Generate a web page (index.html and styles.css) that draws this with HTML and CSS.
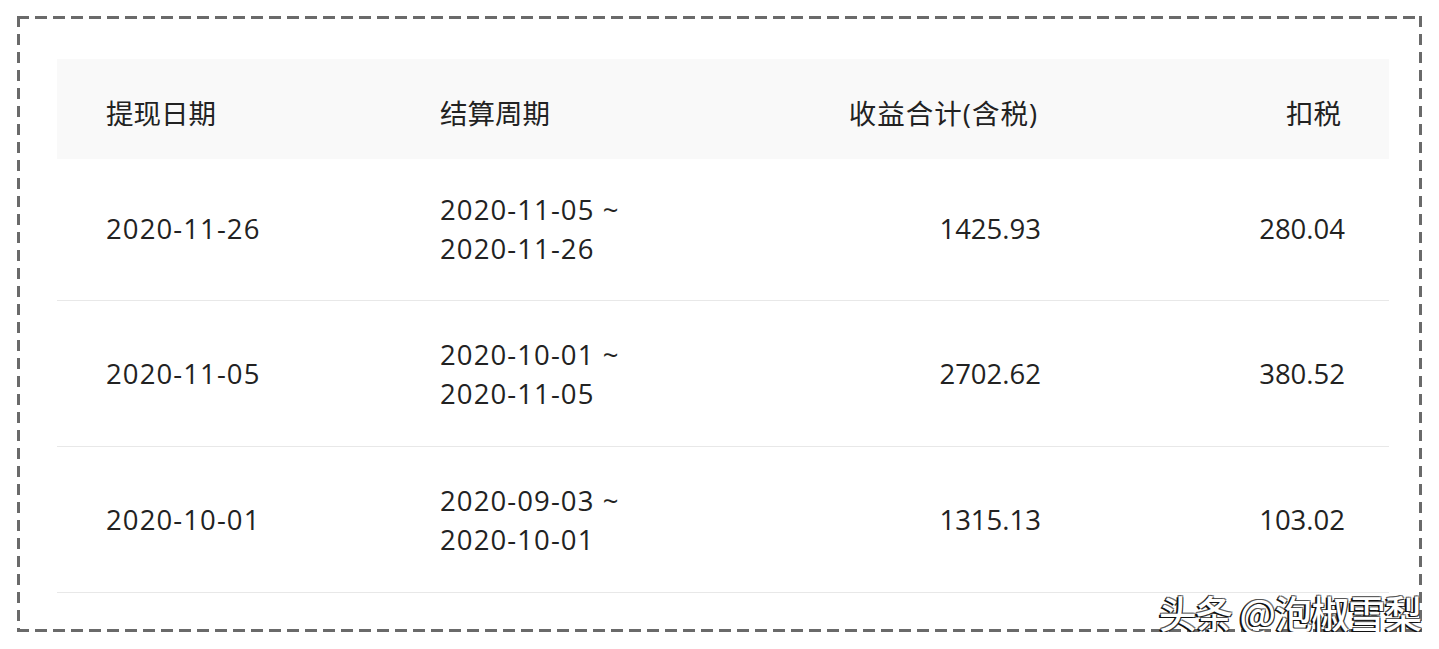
FILE: index.html
```html
<!DOCTYPE html>
<html lang="zh">
<head>
<meta charset="utf-8">
<link rel="stylesheet" href="styles.css">
</head>
<body>
<div class="frame">
  <div class="table">
    <div class="row head">
      <div class="cell c1">提现日期</div>
      <div class="cell c2">结算周期</div>
      <div class="cell c3">收益合计(含税)</div>
      <div class="cell c4">扣税</div>
    </div>
    <div class="row body first">
      <div class="cell c1 date">2020-11-26</div>
      <div class="cell c2 date">2020-11-05 ~<br>2020-11-26</div>
      <div class="cell c3">1425.93</div>
      <div class="cell c4">280.04</div>
    </div>
    <div class="row body">
      <div class="cell c1 date">2020-11-05</div>
      <div class="cell c2 date">2020-10-01 ~<br>2020-11-05</div>
      <div class="cell c3">2702.62</div>
      <div class="cell c4">380.52</div>
    </div>
    <div class="row body">
      <div class="cell c1 date">2020-10-01</div>
      <div class="cell c2 date">2020-09-03 ~<br>2020-10-01</div>
      <div class="cell c3">1315.13</div>
      <div class="cell c4">103.02</div>
    </div>
  </div>
  <div class="watermark">头条 @泡椒雪梨</div>
</div>
</body>
</html>
```

FILE: styles.css
```css
html, body {
  margin: 0;
  padding: 0;
  background: #ffffff;
}
body {
  padding: 16px 17px 0 17px;
  font-family: "Open Sans", "Noto Sans CJK SC", sans-serif;
  color: #222222;
}
.frame {
  position: relative;
  width: 1405px;
  height: 616px;
  box-sizing: border-box;
  padding: 43px 33px 0 40px;
  background:
    repeating-linear-gradient(90deg, #6a6a6a 0 12px, transparent 12px 18px) left top / 100% 3px no-repeat,
    repeating-linear-gradient(90deg, #6a6a6a 0 12px, transparent 12px 18px) left bottom / 100% 3px no-repeat,
    repeating-linear-gradient(180deg, #6a6a6a 0 11px, transparent 11px 18px) left top / 3px 100% no-repeat,
    repeating-linear-gradient(180deg, #6a6a6a 0 11px, transparent 11px 18px) right top / 3px 100% no-repeat;
}
.table {
  display: flex;
  flex-direction: column;
}
.row {
  display: grid;
  grid-template-columns: 334px 309px 385px 304px;
  align-items: center;
}
.head {
  height: 100px;
  background: #f9f9f9;
  padding-top: 8px;
  box-sizing: border-box;
}
.body {
  height: 146px;
  border-bottom: 1px solid #e8e8e8;
  box-sizing: border-box;
}
.body.first {
  height: 142px;
  padding-bottom: 2px;
}
.cell {
  font-size: 27.5px;
  line-height: 39px;
}
.head .c3 {
  letter-spacing: 1px;
  padding-right: 47px;
}
.head .c4 {
  padding-right: 48px;
}
.date {
  letter-spacing: 1.1px;
}
.c1, .c2 {
  padding-left: 49px;
}
.c3 {
  text-align: right;
  padding-right: 44px;
}
.c4 {
  text-align: right;
  padding-right: 44px;
}
.watermark {
  position: absolute;
  right: 1px;
  bottom: -2px;
  font-family: "Noto Sans CJK SC", sans-serif;
  font-weight: 500;
  font-size: 37.5px;
  line-height: 44px;
  color: #ffffff;
  text-shadow: -2px 1px 0 #111111, 1px 1px 0 #333333, -1px -1px 0 #555555, 1px -1px 0 #777777;
  letter-spacing: -1px;
}
```
